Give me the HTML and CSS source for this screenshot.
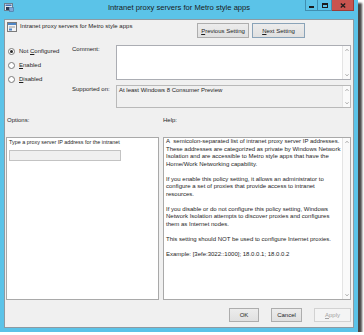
FILE: index.html
```html
<!DOCTYPE html>
<html>
<head>
<meta charset="utf-8">
<title>Intranet proxy servers for Metro style apps</title>
<link rel="stylesheet" href="styles.css">
</head>
<body>
<div class="window">
  <div class="titlebar">
    <svg class="app-icon" viewBox="0 0 10 9" width="10" height="9">
      <rect x="0.5" y="0.5" width="8" height="7" fill="#dfe8f0" stroke="#6b7f90"/>
      <rect x="1.5" y="1.5" width="6" height="1.5" fill="#3d6fb5"/>
      <rect x="2" y="4" width="3" height="3" fill="#2b3b55"/>
      <rect x="5.5" y="4.5" width="4" height="4" fill="#7ea7d8" stroke="#4a6f9a" stroke-width="0.6"/>
    </svg>
    <div class="title">Intranet proxy servers for Metro style apps</div>
    <div class="caption">
      <div class="cbtn min"><span class="g-min"></span></div>
      <div class="cbtn max"><span class="g-max"></span></div>
      <div class="cbtn close">
        <svg viewBox="0 0 6 5" width="6" height="5"><path d="M0.8 0.5 L5.2 4.5 M5.2 0.5 L0.8 4.5" stroke="#1c1c1c" stroke-width="1.3"/></svg>
      </div>
    </div>
  </div>
  <div class="client">
    <div class="header">
      <svg class="setting-icon" viewBox="0 0 10 10" width="10" height="10">
        <rect x="0.5" y="0.5" width="9" height="9" fill="#f4f4f4" stroke="#7b7b7b"/>
        <rect x="1" y="1" width="8" height="2" fill="#4f86c6"/>
        <rect x="2" y="4.5" width="6" height="1" fill="#9a9a9a"/>
        <rect x="2" y="6.5" width="3" height="2" fill="#4f86c6"/>
      </svg>
      <div class="setting-name">Intranet proxy servers for Metro style apps</div>
      <div class="nav">
        <button class="btn nav-btn"><u>P</u>revious Setting</button>
        <button class="btn nav-btn focused"><u>N</u>ext Setting</button>
      </div>
    </div>
    <div class="config">
      <div class="states">
        <div class="radio checked"><span class="circle"></span><span>Not <u>C</u>onfigured</span></div>
        <div class="radio"><span class="circle"></span><span><u>E</u>nabled</span></div>
        <div class="radio"><span class="circle"></span><span><u>D</u>isabled</span></div>
      </div>
      <div class="fields">
        <div class="flabel">Comment:</div>
        <div class="box comment">
          <div class="box-body"></div>
          <div class="vscroll">
            <div class="arrow"><svg viewBox="0 0 8 8" width="8" height="8"><path d="M2.5 4.8 L4 3.3 L5.5 4.8" fill="none" stroke="#8a8a8a" stroke-width="0.8"/></svg></div>
            <div class="arrow"><svg viewBox="0 0 8 8" width="8" height="8"><path d="M2.5 3.3 L4 4.8 L5.5 3.3" fill="none" stroke="#8a8a8a" stroke-width="0.8"/></svg></div>
          </div>
        </div>
        <div class="flabel">Supported on:</div>
        <div class="box supported">
          <div class="box-body">At least Windows 8 Consumer Preview</div>
          <div class="vscroll">
            <div class="arrow"><svg viewBox="0 0 8 8" width="8" height="8"><path d="M2.5 4.8 L4 3.3 L5.5 4.8" fill="none" stroke="#8a8a8a" stroke-width="0.8"/></svg></div>
            <div class="arrow"><svg viewBox="0 0 8 8" width="8" height="8"><path d="M2.5 3.3 L4 4.8 L5.5 3.3" fill="none" stroke="#8a8a8a" stroke-width="0.8"/></svg></div>
          </div>
        </div>
      </div>
    </div>
    <div class="section-labels">
      <div class="sl-options">Options:</div>
      <div class="sl-help">Help:</div>
    </div>
    <div class="panels">
      <div class="panel options">
        <div class="opt-label">Type a proxy server IP address for the intranet</div>
        <div class="opt-input"></div>
      </div>
      <div class="panel help">
        <div class="help-text">
          <p>A&nbsp; semicolon-separated list of intranet proxy server IP addresses. These addresses are categorized as private by Windows Network Isolation and are accessible to Metro style apps that have the Home/Work Networking capability.</p>
          <p>If you enable this policy setting, it allows an administrator to configure a set of proxies that provide access to intranet resources.</p>
          <p>If you disable or do not configure this policy setting, Windows Network Isolation attempts to discover proxies and configures them as Internet nodes.</p>
          <p>This setting should NOT be used to configure Internet proxies.</p>
          <p>Example: [3efe:3022::1000]; 18.0.0.1; 18.0.0.2</p>
        </div>
        <div class="vscroll">
          <div class="arrow"><svg viewBox="0 0 8 8" width="8" height="8"><path d="M2.5 4.8 L4 3.3 L5.5 4.8" fill="none" stroke="#8a8a8a" stroke-width="0.8"/></svg></div>
          <div class="arrow"><svg viewBox="0 0 8 8" width="8" height="8"><path d="M2.5 3.3 L4 4.8 L5.5 3.3" fill="none" stroke="#8a8a8a" stroke-width="0.8"/></svg></div>
        </div>
      </div>
    </div>
    <div class="footer">
      <button class="btn foot-btn ok">OK</button>
      <button class="btn foot-btn cancel">Cancel</button>
      <button class="btn foot-btn apply disabled"><u>A</u>pply</button>
    </div>
  </div>
</div>
</body>
</html>
```

FILE: styles.css
```css
* { box-sizing: border-box; }
html, body { margin: 0; padding: 0; background: #ffffff; }
body {
  font-family: "Liberation Sans", Arial, sans-serif;
  font-size: 6px;
  color: #1e1e1e;
}
u { text-decoration-thickness: 0.6px; text-underline-offset: 1px; }

.window {
  width: 358px;
  height: 332px;
  background: #5bc3e8;
  display: flex;
  flex-direction: column;
  box-shadow: 4px 3px 2px rgba(0, 0, 0, 0.72);
}

/* title bar */
.titlebar {
  height: 19px;
  display: grid;
  grid-template-columns: 1fr auto 1fr;
  align-items: start;
}
.app-icon { margin: 3px 0 0 4px; display: block; }
.title {
  font-size: 7.6px;
  line-height: 10px;
  padding-top: 3px;
  color: #1a1a1a;
  white-space: nowrap;
}
.caption {
  justify-self: end;
  display: flex;
  margin-right: 4px;
}
.cbtn {
  height: 11px;
  display: flex;
  align-items: center;
  justify-content: center;
  border: 1px solid #3f8fb1;
  border-top: none;
}
.cbtn.min { width: 13px; }
.cbtn.max { width: 14px; border-left: none; }
.cbtn.close {
  width: 22px;
  background: #c9544f;
  border-color: #9c3b37;
  border-left: none;
}
.g-min { width: 5px; height: 2px; background: #1c1c1c; margin-top: 3px; }
.g-max { width: 6px; height: 5px; border: 1px solid #1c1c1c; border-top-width: 2px; }

/* client area */
.client {
  flex: 1;
  margin: 0 4px 4px;
  background: #f0f0f0;
  border: 1px solid #8d9aa2;
  display: flex;
  flex-direction: column;
}

.header {
  height: 25px;
  display: flex;
  align-items: flex-start;
  padding: 2px 0 0 2px;
}
.setting-icon { display: block; }
.setting-name { margin-left: 3px; line-height: 8px; white-space: nowrap; }
.nav {
  margin-left: auto;
  margin-right: 48px;
  margin-top: 1px;
  display: flex;
  gap: 3px;
}

.btn {
  font-family: inherit;
  font-size: 6px;
  color: #1e1e1e;
  padding: 0;
  margin: 0;
  border: 1px solid #adadad;
  background: linear-gradient(#ececec, #e0e0e0);
  display: flex;
  align-items: center;
  justify-content: center;
  line-height: 8px;
}
.nav-btn { height: 15px; width: 52px; }
.nav-btn.focused { width: 53px; border-color: #8aa3b8; }

.config { display: flex; height: 63px; }
.states {
  width: 67px;
  padding-left: 3px;
  display: flex;
  flex-direction: column;
  gap: 2px;
}
.radio {
  height: 12px;
  display: flex;
  align-items: center;
  gap: 4px;
  line-height: 8px;
}
.circle {
  width: 7px;
  height: 7px;
  border-radius: 50%;
  border: 1px solid #7a7a7a;
  background: #ffffff;
  display: flex;
  align-items: center;
  justify-content: center;
}
.radio.checked .circle::after {
  content: "";
  width: 3px;
  height: 3px;
  border-radius: 50%;
  background: #2a2a2a;
}

.fields {
  display: grid;
  grid-template-columns: 44px 235px;
  grid-template-rows: 35px 23px;
  row-gap: 5px;
}
.flabel { line-height: 8px; white-space: nowrap; }

.box {
  display: flex;
  border: 1px solid #abadb3;
}
.box-body { flex: 1; padding: 0 2px; line-height: 8px; }
.comment { background: #ffffff; }
.supported { background: #f0f0f0; border-color: #b9b9b9; }

.vscroll {
  width: 8px;
  background: #fafafa;
  border-left: 1px solid #e4e4e4;
  display: flex;
  flex-direction: column;
  justify-content: space-between;
}
.arrow { height: 8px; }
.arrow svg { display: block; }

.section-labels {
  margin-top: 8px;
  line-height: 8px;
  display: flex;
}
.sl-options { width: 158px; padding-left: 2px; }

.panels {
  margin-top: 13px;
  height: 163px;
  display: flex;
  gap: 4px;
  padding-left: 1px;
}
.panel {
  background: #ffffff;
  border: 1px solid #a9a9a9;
}
.options { width: 153px; padding: 0 2px; }
.opt-label { font-size: 5.4px; line-height: 8px; white-space: nowrap; }
.opt-input {
  margin-top: 4px;
  width: 112px;
  height: 11px;
  background: #f0f0f0;
  border: 1px solid #c3c3c3;
}
.help { width: 188px; display: flex; }
.help-text { flex: 1; padding: 0 0 0 2px; line-height: 7.5px; }
.help-text p { margin: 0 0 7.5px; }

.footer {
  margin-top: 8px;
  display: flex;
  justify-content: flex-end;
  gap: 12px;
  padding-right: 2px;
}
.foot-btn { height: 14px; }
.foot-btn.ok { width: 30px; }
.foot-btn.cancel { width: 31px; }
.foot-btn.apply { width: 37px; }
.foot-btn.disabled {
  color: #a3a3a3;
  background: #f4f4f4;
  border-color: #d2d2d2;
}
```
